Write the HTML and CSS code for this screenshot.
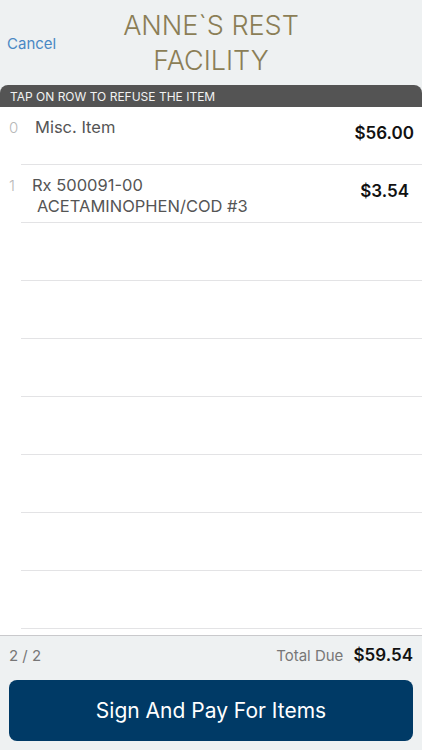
FILE: index.html
```html
<!DOCTYPE html>
<html lang="en">
<head>
    <meta charset="UTF-8">
    <meta name="viewport" content="width=device-width, initial-scale=1.0">
    <title>Refuse Items</title>
    <link rel="stylesheet" href="styles.css">
</head>
<body>
    <!-- Top bar -->
    <div class="header">
        <a class="cancel" href="#">Cancel</a>
        <h1 class="title">ANNE`S REST<br>FACILITY</h1>
        <span></span>
    </div>

    <div class="hint">TAP ON ROW TO REFUSE THE ITEM</div>

    <!-- Item list -->
    <div class="list">
        <div class="row">
            <span class="idx">0</span>
            <div class="name name-misc">Misc. Item</div>
            <span class="price">$56.00</span>
        </div>
        <div class="row">
            <span class="idx">1</span>
            <div class="name">Rx 500091-00<br><span class="drug">ACETAMINOPHEN/COD #3</span></div>
            <span class="price price-rx">$3.54</span>
        </div>
        <div class="row"></div>
        <div class="row"></div>
        <div class="row"></div>
        <div class="row"></div>
        <div class="row"></div>
        <div class="row"></div>
        <div class="row"></div>
    </div>

    <!-- Totals and pay button -->
    <div class="footer">
        <div class="totals">
            <span class="count">2 / 2</span>
            <span class="due">Total Due <b>$59.54</b></span>
        </div>
        <button class="pay">Sign And Pay For Items</button>
    </div>
</body>
</html>
```

FILE: styles.css
```css
body {
    margin: 0;
    padding: 0;
    width: 422px;
    height: 750px;
    overflow: hidden;
    background: #eef1f2;
    font-family: Inter, Roboto, "Liberation Sans", sans-serif;
    display: flex;
    flex-direction: column;
}

.header {
    height: 85px;
    display: grid;
    grid-template-columns: 1fr auto 1fr;
    align-items: center;
}

.cancel {
    color: #4a88c4;
    font-size: 15px;
    text-decoration: none;
    padding-left: 7px;
    padding-top: 2px;
}

.title {
    margin: 0;
    text-align: center;
    font-weight: 300;
    font-size: 27px;
    line-height: 35px;
    color: #8b7e56;
}

.hint {
    height: 22px;
    line-height: 23px;
    background: #545454;
    color: #f2f2f2;
    font-size: 12px;
    padding-left: 10px;
    border-radius: 8px 8px 0 0;
}

.list {
    background: #fff;
    height: 528px;
    border-bottom: 1px solid #c9c9cc;
}

.row {
    height: 57px;
    margin-left: 21px;
    border-bottom: 1px solid #e3e3e5;
    display: flex;
    position: relative;
}

.idx {
    position: absolute;
    left: -12px;
    top: 11px;
    font-size: 15px;
    font-weight: 300;
    color: #b8b8b8;
}

.name {
    flex: 1;
    padding-top: 10px;
    padding-left: 11px;
    font-size: 16.5px;
    line-height: 21px;
    color: #555;
}

.name-misc {
    padding-left: 14px;
}

.drug {
    padding-left: 5px;
}

.price {
    padding-top: 16px;
    padding-right: 8px;
    font-size: 17px;
    font-weight: 600;
    color: #111;
}

.price-rx {
    padding-right: 13px;
}

.footer {
    flex: 1;
    padding: 0 9px;
}

.totals {
    height: 38px;
    display: flex;
    justify-content: space-between;
    align-items: center;
    color: #777;
    font-size: 15px;
}

.due b {
    color: #111;
    font-size: 17px;
    font-weight: 600;
    margin-left: 6px;
}

.pay {
    display: block;
    width: 100%;
    height: 61px;
    margin-top: 6px;
    border: none;
    border-radius: 8px;
    background: #003a66;
    color: #fff;
    font-family: Inter, Roboto, "Liberation Sans", sans-serif;
    font-size: 21px;
}
```
